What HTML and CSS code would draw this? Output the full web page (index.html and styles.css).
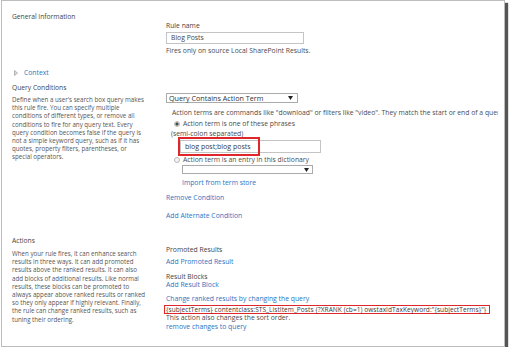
FILE: index.html
```html
<!DOCTYPE html>
<html lang="en">

<head>
    <meta charset="UTF-8">
    <meta name="viewport" content="width=device-width, initial-scale=1.0">
    <title>Query Rule - Blog Posts</title>
    <link rel="stylesheet" href="styles.css">
</head>

<body>
    <div class="frame">
        <div class="page">

            <!-- General Information -->
            <section class="row general">
                <div class="label-col">
                    <h2>General Information</h2>
                </div>
                <div class="field-col">
                    <div class="field-label">Rule name</div>
                    <div class="textbox rule-name">Blog Posts</div>
                    <div class="hint fires">Fires only on source Local SharePoint Results.</div>
                </div>
            </section>

            <!-- Context -->
            <section class="row context">
                <div class="label-col">
                    <a class="expander" href="#">
                        <svg width="4" height="6" viewBox="0 0 4 6"><path d="M0.5 0.5 L3.5 3 L0.5 5.5 Z" fill="#d6d6d6" stroke="#a8a8a8" stroke-width="0.8"/></svg>
                        Context
                    </a>
                </div>
            </section>

            <!-- Query Conditions -->
            <section class="row conditions">
                <div class="label-col">
                    <h2>Query Conditions</h2>
                    <p>Define when a user's search box query makes this rule fire. You can specify multiple conditions of different types, or remove all conditions to fire for any query text. Every query condition becomes false if the query is not a simple keyword query, such as if it has quotes, property filters, parentheses, or special operators.</p>
                </div>
                <div class="field-col">
                    <div class="select cond-type">
                        <span>Query Contains Action Term</span>
                        <svg class="arrow" width="5" height="4" viewBox="0 0 5 4"><path d="M0 0 H5 L2.5 4 Z" fill="#222"/></svg>
                    </div>
                    <div class="hint action-hint">Action terms are commands like "download" or filters like "video". They match the start or end of a query.</div>
                    <label class="radio first"><span class="dot checked"></span>Action term is one of these phrases</label>
                    <div class="hint semi">(semi-colon separated)</div>
                    <div class="textbox phrases">
                        blog post;blog posts
                        <span class="callout"></span>
                    </div>
                    <label class="radio second"><span class="dot"></span>Action term is an entry in this dictionary</label>
                    <div class="select dictionary">
                        <span></span>
                        <svg class="arrow" width="5" height="4" viewBox="0 0 5 4"><path d="M0 0 H5 L2.5 4 Z" fill="#222"/></svg>
                    </div>
                    <a class="link import" href="#">Import from term store</a>
                    <a class="link remove" href="#">Remove Condition</a>
                    <a class="link alternate" href="#">Add Alternate Condition</a>
                </div>
            </section>

            <!-- Actions -->
            <section class="row actions">
                <div class="label-col">
                    <h2>Actions</h2>
                    <p>When your rule fires, it can enhance search results in three ways. It can add promoted results above the ranked results. It can also add blocks of additional results. Like normal results, these blocks can be promoted to always appear above ranked results or ranked so they only appear if highly relevant. Finally, the rule can change ranked results, such as tuning their ordering.</p>
                </div>
                <div class="field-col">
                    <div class="field-label">Promoted Results</div>
                    <a class="link add-promoted" href="#">Add Promoted Result</a>
                    <div class="field-label blocks">Result Blocks</div>
                    <a class="link add-block" href="#">Add Result Block</a>
                    <a class="link change-query" href="#">Change ranked results by changing the query</a>
                    <div class="query-text">{subjectTerms} contentclass:STS_ListItem_Posts {?XRANK (cb=1) owstaxIdTaxKeyword:"{subjectTerms}"}</div>
                    <div class="hint">This action also changes the sort order.</div>
                    <a class="link remove-changes" href="#">remove changes to query</a>
                </div>
            </section>

        </div>
    </div>
</body>

</html>
```

FILE: styles.css
```css
body {
    margin: 0;
    background-color: #ffffff;
    font-family: 'Open Sans', 'Noto Sans', sans-serif;
    font-size: 6.8px;
    line-height: 8px;
    color: #4c4c4c;
}

.frame {
    box-sizing: border-box;
    width: 504px;
    height: 347px;
    margin-left: 1px;
    background: #ffffff;
    border: 1px solid #bdbdbd;
    box-shadow: 3px 3px 1px #555555;
}

.page {
    width: 496px;
    height: 100%;
    padding-left: 10px;
    box-sizing: border-box;
    overflow: hidden;
}

.row {
    display: flex;
}

.label-col {
    width: 154px;
    flex-shrink: 0;
}

.field-col {
    padding-top: 9px;
    display: flex;
    flex-direction: column;
    align-items: flex-start;
    white-space: nowrap;
}

h2 {
    margin: 0;
    font-size: 6.7px;
    font-weight: normal;
    line-height: 8px;
    color: #444444;
}

.label-col p {
    margin: 4px 0 0;
    width: 135px;
    font-size: 6.2px;
    line-height: 8.2px;
    color: #555555;
}

a {
    color: #2d74bf;
    text-decoration: none;
}

.link {
    display: block;
    font-size: 6.8px;
}

/* General */
.general {
    margin-top: 12px;
}

.field-label {
    color: #444444;
}

.textbox {
    box-sizing: border-box;
    border: 1px solid #c4c4c4;
    background: #ffffff;
    color: #444444;
}

.rule-name {
    margin-top: 2px;
    width: 138px;
    height: 12px;
    line-height: 10px;
    padding-left: 4px;
}

.fires {
    margin-top: 3px;
}

/* Context */
.context {
    margin-top: 14px;
}

.expander {
    display: flex;
    align-items: center;
    gap: 6px;
    padding-left: 2px;
    font-size: 6.8px;
}

/* Query conditions */
.conditions {
    margin-top: 7px;
}

.select {
    box-sizing: border-box;
    display: flex;
    align-items: center;
    justify-content: space-between;
    border: 1px solid #ababab;
    background: #ffffff;
    color: #333333;
}

.cond-type {
    width: 132px;
    height: 10px;
    line-height: 8px;
    padding: 0 4px 0 2px;
    font-size: 7.2px;
}

.action-hint {
    margin-top: 6px;
    margin-left: 6px;
}

.radio {
    display: flex;
    align-items: center;
    gap: 3px;
    margin-left: 8px;
    height: 8px;
}

.radio.first {
    margin-top: 3px;
}

.radio.second {
    margin-top: 3px;
}

.dot {
    box-sizing: border-box;
    width: 6px;
    height: 6px;
    border-radius: 50%;
    border: 1px solid #b8b8b8;
    background: #f4f4f4;
}

.dot.checked {
    background: radial-gradient(circle, #4a4a4a 0 1.4px, #f4f4f4 1.8px);
}

.semi {
    margin-top: 2px;
    margin-left: 5px;
}

.phrases {
    position: relative;
    margin-top: 2px;
    margin-left: 14px;
    width: 141px;
    height: 13px;
    line-height: 11px;
    padding-left: 4px;
    font-size: 7px;
    color: #3a3a3a;
}

/* red annotation around the typed phrases */
.callout {
    position: absolute;
    left: -3px;
    top: -4px;
    width: 78px;
    height: 15px;
    border: 2px solid #e0262b;
}

.dictionary {
    margin-top: 1px;
    margin-left: 16px;
    width: 131px;
    height: 9px;
    padding: 0 3px 0 2px;
}

.import {
    margin-top: 5px;
    margin-left: 16px;
}

.remove {
    margin-top: 7px;
}

.alternate {
    margin-top: 10px;
}

/* Actions */
.actions {
    margin-top: 17px;
}

.actions .label-col p {
    margin-top: 5px;
}

.add-promoted {
    margin-top: 4px;
}

.blocks {
    margin-top: 7px;
}

.change-query {
    margin-top: 6px;
}

.query-text {
    margin-top: 2px;
    margin-left: -2px;
    padding: 0 3px 0 1px;
    height: 7px;
    line-height: 7px;
    border: 1.5px solid #e0262b;
    font-size: 6.5px;
    letter-spacing: 0.08px;
    color: #3a3a3a;
}

.remove-changes {
    margin-top: 1px;
}
```
